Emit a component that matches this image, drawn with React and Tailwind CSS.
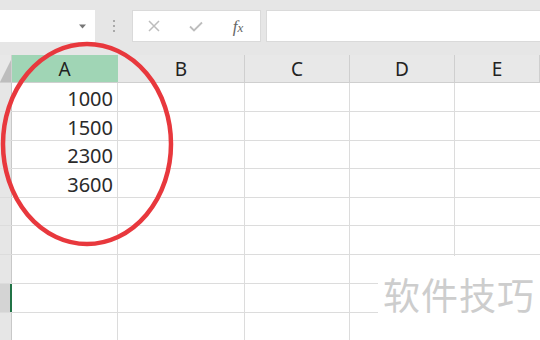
import React from "react";

const cols = [
  { l: "A", w: "w-[106px]", sel: true },
  { l: "B", w: "w-[127px]" },
  { l: "C", w: "w-[105px]" },
  { l: "D", w: "w-[105px]" },
  { l: "E", w: "flex-1" },
];

const rows = [
  { h: "h-[29px]", v: "1000" },
  { h: "h-[29px]", v: "1500" },
  { h: "h-[28px]", v: "2300" },
  { h: "h-[29px]", v: "3600" },
  { h: "h-[28px]", v: "" },
  { h: "h-[29px]", v: "" },
  { h: "h-[29px]", v: "" },
  { h: "h-[29px]", v: "", sel: true },
  { h: "h-[29px]", v: "" },
];

export default function App() {
  return (
    <div
      className="relative w-[540px] h-[340px] overflow-hidden bg-white"
      style={{ fontFamily: '"Noto Sans", "Open Sans", sans-serif' }}
    >
      {/* top bar */}
      <div className="h-[55px] bg-[#e6e6e6] flex items-start pt-[10px]">
        <div className="w-[95px] h-[32px] bg-white flex items-center justify-end pr-[9px]">
          <svg width="7" height="5" viewBox="0 0 7 5">
            <path d="M0 0.5 L7 0.5 L3.5 4.5 Z" fill="#777" />
          </svg>
        </div>
        <div className="w-[37px] h-[32px] flex flex-col items-center justify-center gap-[3px]">
          <div className="w-[2px] h-[2px] bg-[#aaa]" />
          <div className="w-[2px] h-[2px] bg-[#aaa]" />
          <div className="w-[2px] h-[2px] bg-[#aaa]" />
        </div>
        <div className="w-[129px] h-[32px] bg-white border border-[#dadada] flex items-center">
          <div className="w-[42px] flex justify-center">
            <svg width="12" height="12" viewBox="0 0 12 12">
              <path d="M1 1 L11 11 M11 1 L1 11" stroke="#bdbdbd" strokeWidth="1.5" />
            </svg>
          </div>
          <div className="w-[42px] flex justify-center">
            <svg width="14" height="11" viewBox="0 0 14 11">
              <path d="M1 5.5 L5 9.5 L13 1.5" stroke="#bdbdbd" strokeWidth="1.8" fill="none" />
            </svg>
          </div>
          <div
            className="w-[42px] flex justify-center text-[17px] italic text-[#666] leading-none"
            style={{ fontFamily: '"Liberation Serif", serif' }}
          >
            f<span className="text-[13px] mt-[3px]">x</span>
          </div>
        </div>
        <div className="ml-[5px] flex-1 h-[32px] bg-white border-y border-l border-[#dadada]" />
      </div>

      {/* header row */}
      <div className="flex h-[28px] bg-[#e8e8e8] border-b border-[#cfcfcf]">
        <div className="w-[12px] h-full border-r border-[#cfcfcf] flex items-end">
          <svg width="11" height="24" viewBox="0 0 11 24">
            <path d="M11 2 L11 24 L0 24 Z" fill="#bdbdbd" />
          </svg>
        </div>
        {cols.map((c) => (
          <div
            key={c.l}
            className={`${c.w} h-full flex items-center justify-center pt-[1px] text-[19px] text-[#222] border-r ${
              c.sel ? "bg-[#a0d5b5] border-[#a0d5b5]" : "border-[#cfcfcf]"
            }`}
          >
            {c.l}
          </div>
        ))}
      </div>

      {/* rows */}
      {rows.map((r, i) => (
        <div key={i} className={`flex ${r.h} border-b border-[#dcdcdc]`}>
          <div
            className={`w-[12px] h-full border-r ${
              r.sel ? "bg-[#d4d4d4] border-[#217346] border-r-2" : "bg-[#e6e6e6] border-[#c8c8c8]"
            }`}
          />
          <div className="w-[106px] h-full border-r border-[#dcdcdc] flex items-center justify-end pr-[4px] pt-[3px] text-[20px] text-[#2a2a2a]">
            {r.v}
          </div>
          <div className="w-[127px] h-full border-r border-[#dcdcdc]" />
          <div className="w-[105px] h-full border-r border-[#dcdcdc]" />
          <div className="w-[105px] h-full border-r border-[#dcdcdc]" />
          <div className="flex-1 h-full" />
        </div>
      ))}

      {/* watermark */}
      <div
        className="absolute left-[378px] top-[256px] w-[162px] h-[84px] bg-white flex items-start pt-[20px] pl-[5px] text-[37px] text-[#cdcdcd] leading-none tracking-[1px]"
        style={{ fontFamily: '"Noto Sans CJK SC", sans-serif' }}
      >
        软件技巧
      </div>

      {/* red ellipse */}
      <svg className="absolute left-0 top-0 pointer-events-none" width="540" height="340">
        <ellipse cx="87" cy="144" rx="84" ry="100" fill="none" stroke="#e8383d" strokeWidth="4.5" />
      </svg>
    </div>
  );
}
